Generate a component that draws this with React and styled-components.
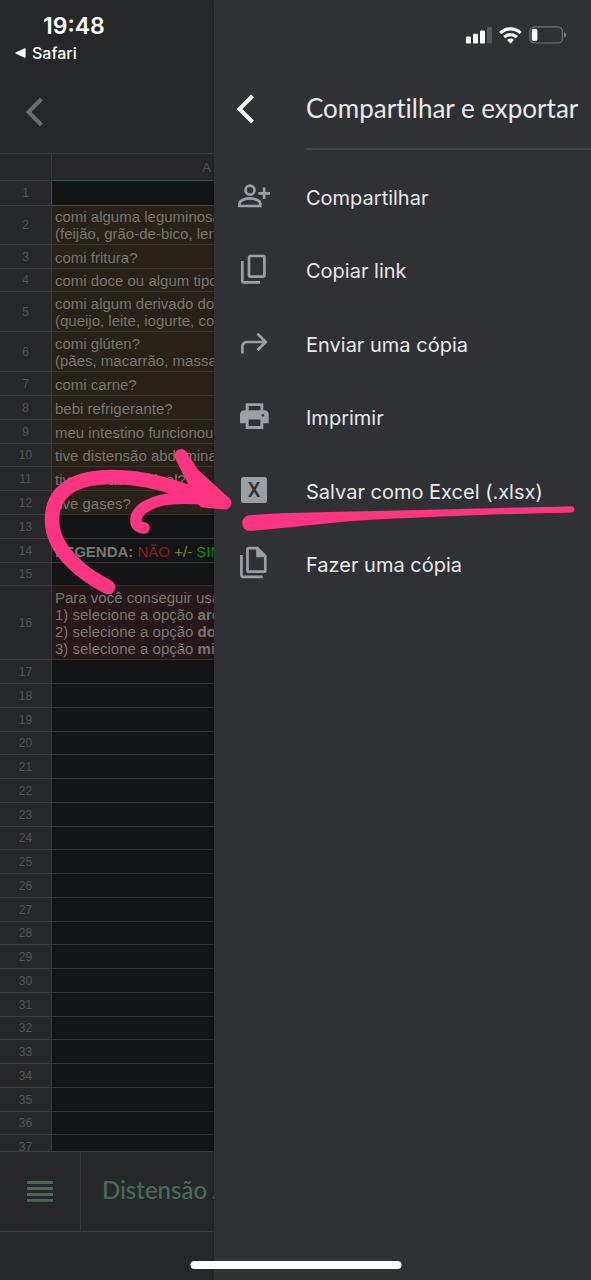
import React from "react";
import styled, { createGlobalStyle } from "styled-components";

const GlobalStyle = createGlobalStyle`
  * { box-sizing: border-box; }
  body { margin: 0; background: #26272a; font-family: Inter, "Liberation Sans", sans-serif; }
  button { font: inherit; color: inherit; background: none; border: 0; padding: 0; margin: 0; text-align: left; cursor: pointer; }
  svg { display: block; flex: none; }
`;

const Screen = styled.div`
  position: relative;
  display: grid;
  grid-template-columns: minmax(0, 1fr) 377px;
  height: 100vh;
  overflow: hidden;
`;

/* Dimmed spreadsheet behind the drawer */
const SheetPane = styled.main`
  display: flex;
  flex-direction: column;
  min-width: 0;
  min-height: 0;
  overflow: hidden;
  background: #26272a;
`;

const ClockArea = styled.div`
  height: 70px;
  padding: 12px 0 0 15px;
  color: #fff;
`;

const Clock = styled.div`
  padding-left: 28px;
  font-size: 23px;
  line-height: 28px;
  font-weight: 600;
`;

const ReturnLink = styled.a`
  display: flex;
  align-items: center;
  gap: 6px;
  height: 26px;
  color: inherit;
  text-decoration: none;
  font-size: 16px;
  font-weight: 500;
`;

const SheetHeader = styled.header`
  display: flex;
  align-items: center;
  height: 83px;
  padding-left: 25px;
  color: #6b6c6f;
`;

const GridArea = styled.div`
  flex: 1 1 0;
  min-height: 0;
  overflow: hidden;
`;

const Grid = styled.table`
  width: 362px;
  table-layout: fixed;
  border-collapse: separate;
  border-spacing: 0;
  font-family: "Liberation Sans", Arial, sans-serif;
`;

const HeadCell = styled.th`
  width: ${(p) => p.$width}px;
  height: 27px;
  padding: 0;
  border-top: 1px solid #3b3c3f;
  border-right: 1px solid #3b3c3f;
  color: #535457;
  font-size: 13px;
  font-weight: 400;
`;

const RowNumber = styled.th`
  height: ${(p) => p.$height}px;
  padding: 0;
  border-top: 1px solid #3b3c3f;
  border-right: 1px solid ${(p) => (p.$selected ? "#2f5744" : "#3b3c3f")};
  color: #535457;
  font-size: 12px;
  line-height: 14px;
  font-weight: 400;
`;

const tones = {
  none: { bg: "#131416", line: "#333437" },
  amber: { bg: "#272118", line: "#3a342a" },
  red: { bg: "#26171a", line: "#3a2a2c" },
  selected: { bg: "#131416", line: "#2f5744" },
};

const Cell = styled.td`
  padding: 0 0 2px 3px;
  vertical-align: bottom;
  white-space: pre;
  background: ${(p) => tones[p.$tone].bg};
  border-top: 1px solid ${(p) => tones[p.$edge || p.$tone].line};
  color: #79766f;
  font-size: 15px;
  line-height: 17px;
`;

const Mark = styled.span`
  color: ${(p) => p.$color};
`;

const TabBar = styled.nav`
  display: flex;
  flex: none;
  height: 81px;
  border-top: 1px solid #3b3c3f;
  border-bottom: 1px solid #3b3c3f;
  color: #4a6a58;
`;

const AllSheets = styled.button`
  display: flex;
  align-items: center;
  justify-content: center;
  flex: none;
  width: 81px;
  border-right: 1px solid #3b3c3f;
`;

const SheetTab = styled.button`
  padding: 0 0 4px 21px;
  white-space: nowrap;
  font-family: Lato, sans-serif;
  font-size: 24px;
  font-weight: 500;
`;

const SafeArea = styled.div`
  flex: none;
  height: 48px;
`;

/* Drawer */
const Drawer = styled.aside`
  position: relative;
  display: flex;
  flex-direction: column;
  background: #303135;
  box-shadow: 0 0 4px rgba(0, 0, 0, 0.4);
`;

const Indicators = styled.div`
  display: flex;
  justify-content: flex-end;
  align-items: center;
  gap: 7px;
  height: 70px;
  padding-right: 24px;
`;

const DrawerHeader = styled.header`
  display: flex;
  align-items: stretch;
  height: 80px;
`;

const BackButton = styled.button`
  display: flex;
  align-items: center;
  flex: none;
  width: 91px;
  padding: 0 0 2px 22px;
  color: #f1f3f4;
`;

const Title = styled.h1`
  flex: 1;
  margin: 0;
  padding-left: 1px;
  border-bottom: 2px solid #424346;
  color: #e8eaed;
  font-family: Lato, sans-serif;
  font-size: 26px;
  line-height: 76px;
  font-weight: 400;
  font-variant-ligatures: none;
  white-space: nowrap;
`;

const Menu = styled.ul`
  display: grid;
  grid-auto-rows: 1fr;
  height: 441px;
  margin: 9px 0 0;
  padding: 0;
  list-style: none;
`;

const MenuButton = styled.button`
  display: flex;
  align-items: center;
  gap: 36px;
  width: 100%;
  height: 100%;
  padding-left: 24px;
  color: #9aa0a6;
`;

const MenuLabel = styled.span`
  padding-top: 4px;
  color: #e8eaed;
  font-size: 20px;
  line-height: 26px;
  white-space: nowrap;
`;

const HomeIndicator = styled.div`
  position: absolute;
  bottom: 11px;
  left: 50%;
  width: 211px;
  height: 8px;
  border-radius: 4px;
  background: #fff;
  transform: translateX(-50%);
`;

const Ink = styled.svg`
  position: absolute;
  top: 0;
  left: 0;
  pointer-events: none;
`;

const Chevron = () => (
  <svg width="20" height="30" viewBox="0 0 20 30" fill="none" stroke="currentColor" strokeWidth="4" aria-hidden="true">
    <path d="M16.5 2 L3.5 15 L16.5 28" />
  </svg>
);

const MenuIcon = ({ children }) => (
  <svg width="32" height="36" viewBox="0 0 32 36" fill="none" stroke="currentColor" strokeWidth="2.7" aria-hidden="true">
    {children}
  </svg>
);

const PersonAdd = () => (
  <MenuIcon>
    <circle cx="12" cy="12.2" r="4.5" />
    <path d="M1.5 28V25.6C1.5 22.2 8 20.4 11.9 20.4S22.3 22.2 22.3 25.6V28Z" />
    <path d="M20.3 15.3H32M26.1 9.5V21.1" />
  </MenuIcon>
);

const Copy = () => (
  <MenuIcon>
    <rect x="11" y="5" width="15.4" height="20.6" rx="1.4" />
    <path d="M4.3 10V29.8a1.6 1.6 0 0 0 1.6 1.6H22" />
  </MenuIcon>
);

const Forward = () => (
  <MenuIcon>
    <path d="M4.4 28.5V21.5a4.5 4.5 0 0 1 4.5-4.5H27M19.5 8.8L27.7 17L19.5 25.2" />
  </MenuIcon>
);

const Print = () => (
  <MenuIcon>
    <path
      fill="currentColor"
      stroke="none"
      fillRule="evenodd"
      d="M7.7 5.3H25.3V12.3H26.5A4.2 4.2 0 0 1 30.7 16.5V25.3H25.3V31H7.7V25.3H2V16.5A4.2 4.2 0 0 1 6.2 12.3H7.7ZM10.6 8.1V12.3H22.4V8.1ZM10.6 21.6V28.1H22.4V21.6ZM24.8 15.9a1.4 1.4 0 1 0 .01 0Z"
    />
  </MenuIcon>
);

const Excel = () => (
  <MenuIcon>
    <rect x="3" y="5" width="26" height="26" rx="2.6" fill="currentColor" stroke="none" />
    <text x="16" y="25" textAnchor="middle" fontFamily="Roboto, sans-serif" fontSize="20" fontWeight="500" fill="#303135" stroke="none">
      X
    </text>
  </MenuIcon>
);

const FileCopy = () => (
  <MenuIcon>
    <path d="M10.8 3.1H19.4L27.3 11V25.4a1.3 1.3 0 0 1-1.3 1.3H10.8a1.3 1.3 0 0 1-1.3-1.3V4.4a1.3 1.3 0 0 1 1.3-1.3Z" />
    <path d="M18.2 2.5V12.3H28Z" fill="currentColor" stroke="none" />
    <path d="M3.4 10V30.3a1.5 1.5 0 0 0 1.5 1.5H24.7" />
  </MenuIcon>
);

const items = [
  [PersonAdd, "Compartilhar"],
  [Copy, "Copiar link"],
  [Forward, "Enviar uma cópia"],
  [Print, "Imprimir"],
  [Excel, "Salvar como Excel (.xlsx)"],
  [FileCopy, "Fazer uma cópia"],
];

const filledRows = [
  { height: 25, tone: "none", edge: "selected" },
  { height: 39, tone: "amber", edge: "selected", text: "comi alguma leguminosa\n(feijão, grão-de-bico, len" },
  { height: 24, tone: "amber", text: "comi fritura?" },
  { height: 23, tone: "amber", text: "comi doce ou algum tipo" },
  { height: 40, tone: "amber", text: "comi algum derivado do\n(queijo, leite, iogurte, coa" },
  { height: 40, tone: "amber", text: "comi glúten?\n(pães, macarrão, massa" },
  { height: 24, tone: "amber", text: "comi carne?" },
  { height: 24, tone: "amber", text: "bebi refrigerante?" },
  { height: 24, tone: "amber", text: "meu intestino funcionou?" },
  { height: 23, tone: "amber", text: "tive distensão abdominal" },
  { height: 24, tone: "amber", text: "tive dor abdominal?" },
  { height: 24, tone: "amber", text: "tive gases?" },
  { height: 24, tone: "none" },
  {
    height: 24,
    tone: "none",
    text: (
      <>
        <b>LEGENDA:</b> <Mark $color="#8a1d20">NÃO</Mark> <Mark $color="#85802a">+/-</Mark> <Mark $color="#168a20">SIM</Mark>
      </>
    ),
  },
  { height: 23, tone: "none" },
  {
    height: 74,
    tone: "red",
    text: (
      <>
        {"Para você conseguir usa\n1) selecione a opção "}
        <b>arq</b>
        {"\n2) selecione a opção "}
        <b>dow</b>
        {"\n3) selecione a opção "}
        <b>mic</b>
      </>
    ),
  },
];

const emptyRows = Array.from({ length: 21 }, (_, i) => ({ height: i % 4 === 3 ? 23 : 24, tone: "none" }));
const rows = [...filledRows, ...emptyRows];

export default function App() {
  return (
    <Screen>
      <GlobalStyle />
      <SheetPane>
        <ClockArea>
          <Clock>19:48</Clock>
          <ReturnLink href="#safari">
            <svg width="11" height="10" viewBox="0 0 11 10" fill="currentColor" aria-hidden="true">
              <path d="M0.6 4.5 L9.6 0.2 Q10.6 0 10.6 1 V9 Q10.6 10 9.6 9.8 L0.6 5.5 Q0 5 0.6 4.5Z" />
            </svg>
            Safari
          </ReturnLink>
        </ClockArea>
        <SheetHeader>
          <button aria-label="Voltar">
            <Chevron />
          </button>
        </SheetHeader>
        <GridArea>
          <Grid>
            <thead>
              <tr>
                <HeadCell $width={52} />
                <HeadCell $width={310}>A</HeadCell>
              </tr>
            </thead>
            <tbody>
              {rows.map((row, i) => (
                <tr key={i}>
                  <RowNumber scope="row" $height={row.height} $selected={i === 0}>
                    {i + 1}
                  </RowNumber>
                  <Cell $tone={row.tone} $edge={row.edge}>
                    {row.text}
                  </Cell>
                </tr>
              ))}
            </tbody>
          </Grid>
        </GridArea>
        <TabBar>
          <AllSheets aria-label="Todas as páginas">
            <svg width="26" height="22" viewBox="0 0 26 22" stroke="currentColor" strokeWidth="2.8" aria-hidden="true">
              <path d="M0 1.5H26M0 7.5H26M0 13.5H26M0 19.300H26" />
            </svg>
          </AllSheets>
          <SheetTab>Distensão A</SheetTab>
        </TabBar>
        <SafeArea />
      </SheetPane>

      <Drawer>
        <Indicators>
          <svg width="26" height="18" viewBox="0 0 26 18" fill="#fff" aria-hidden="true">
            <rect x="0" y="10.6" width="5" height="7" rx="1.2" />
            <rect x="7" y="7.8" width="5" height="9.8" rx="1.2" />
            <rect x="14" y="4.6" width="5" height="13" rx="1.2" />
            <rect x="21" y="1" width="5" height="16.6" rx="1.2" fill="#57585b" />
          </svg>
          <svg width="23" height="17" viewBox="0 0 23 17" fill="none" stroke="#fff" strokeWidth="3.2" aria-hidden="true">
            <path d="M1.3 6.1A14.6 14.6 0 0 1 21.7 6.1" />
            <path d="M5.2 10.2A9 9 0 0 1 17.8 10.2" />
            <path d="M8 12.9A5 5 0 0 1 15 12.9L11.5 16.6Z" fill="#fff" stroke="none" />
          </svg>
          <svg width="38" height="18" viewBox="0 0 38 18" fill="none" aria-hidden="true">
            <rect x="0.8" y="0.8" width="32.6" height="16.2" rx="4.6" stroke="#76777a" strokeWidth="1.2" />
            <rect x="2.8" y="2.8" width="5.6" height="12.2" rx="2" fill="#fff" />
            <path d="M35 6.2Q37.4 7 37.4 9T35 11.8Z" fill="#76777a" />
          </svg>
        </Indicators>
        <DrawerHeader>
          <BackButton aria-label="Voltar">
            <Chevron />
          </BackButton>
          <Title>Compartilhar e exportar</Title>
        </DrawerHeader>
        <Menu>
          {items.map(([Icon, label]) => (
            <li key={label}>
              <MenuButton>
                <Icon />
                <MenuLabel>{label}</MenuLabel>
              </MenuButton>
            </li>
          ))}
        </Menu>
      </Drawer>

      <Ink width="591" height="620" viewBox="0 0 591 620" fill="none" stroke="#ff3482" strokeLinecap="round" strokeLinejoin="round" aria-hidden="true">
        <path strokeWidth="14.5" d="M108 587C88 577 52 553 52 520C52 487 80 477 112 477C146 477 172 486 205 498" />
        <path strokeWidth="11.5" d="M144 528C133 527 134 516 142 509C156 498 178 497 204 499" />
        <path fill="#ff3482" strokeWidth="13" d="M181 455.500L193 474L225 503L204 501Z" />
        <path
          fill="#ff3482"
          stroke="none"
          d="M250 515.200C275 513.200 300 512.600 330 512C420 510.300 500 508 571 506.200A3.100 3.100 0 0 1 571.500 512.400C500 514 430 517 380 519.300C335 521.500 300 527 250 531A7.900 7.900 0 0 1 250 515.200Z"
        />
      </Ink>
      <HomeIndicator />
    </Screen>
  );
}
